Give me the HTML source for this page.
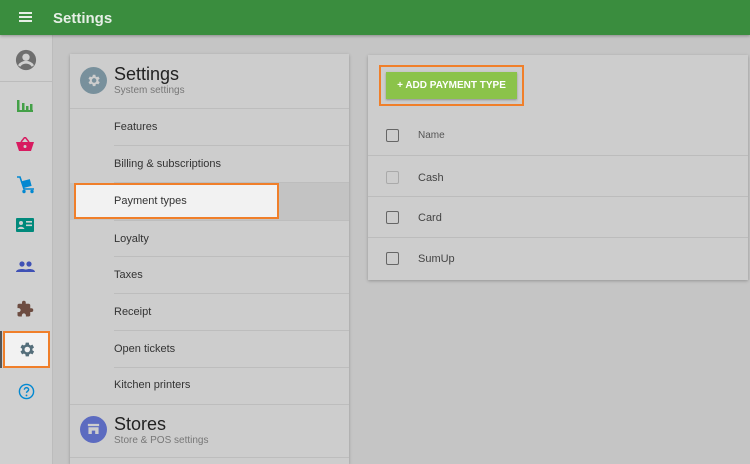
<!DOCTYPE html><html><head><style>
*{margin:0;padding:0;box-sizing:border-box}
html,body{width:750px;height:464px;overflow:hidden}
body{background:#c5c5c5;font-family:"Liberation Sans",sans-serif;position:relative}
.hdr{position:absolute;left:0;top:0;width:750px;height:35px;background:#3a8d3e;color:#e6efe6;box-shadow:0 1px 3px rgba(0,0,0,.3);z-index:2}
.hdr .t{position:absolute;left:53px;top:10px;font-size:15px;font-weight:bold}
.side{position:absolute;left:0;top:35px;width:53px;height:429px;background:#d0d0d0;border-right:1px solid #bcbcbc}
.ic{position:absolute;left:16px}
.card{position:absolute;background:#cdcdcd;box-shadow:0 1px 3px rgba(0,0,0,.25)}
.it{position:absolute;left:44px;width:235px;height:37px;border-bottom:1px solid #bdbdbd;font-size:11px;color:#333;line-height:37px}
.row{position:absolute;left:0;width:380px;height:41px;border-bottom:1px solid #bcbcbc;font-size:11px;color:#444}
.cb{position:absolute;left:18px;width:13px;height:13px;border:1.5px solid #666;border-radius:2px}
.row span{position:absolute;left:50px}
</style></head><body>
<div class="hdr"><svg style="position:absolute;left:19px;top:12px" width="13" height="10"><rect y="0" width="13" height="2" fill="#e6efe6"/><rect y="4" width="13" height="2" fill="#e6efe6"/><rect y="8" width="13" height="2" fill="#e6efe6"/></svg><div class="t">Settings</div></div>
<div class="side">
<div style="position:absolute;left:0;top:46px;width:53px;height:1px;background:#bcbcbc"></div>
<svg class="ic" style="left:15px;top:14px" width="22" height="22" viewBox="0 0 24 24"><circle cx="12" cy="12" r="11" fill="#6e6e6e"/><circle cx="12" cy="9" r="4" fill="#d0d0d0"/><path d="M4.5 18.5c2-3 4.5-4 7.5-4s5.5 1 7.5 4" stroke="#d0d0d0" stroke-width="3" fill="none"/></svg>
<svg class="ic" style="top:62px" width="18" height="16"><rect x="1" y="3" width="2.5" height="12" fill="#43a047"/><rect x="6" y="6" width="2.5" height="9" fill="#43a047"/><rect x="10" y="9" width="2.5" height="6" fill="#43a047"/><rect x="14" y="7" width="2.5" height="8" fill="#43a047"/><rect x="1" y="13" width="16" height="2" fill="#43a047"/></svg>
<svg class="ic" style="top:102px" width="18" height="14"><path d="M5 5L9 0L13 5" stroke="#d81b60" stroke-width="1.5" fill="none"/><path d="M0 5h18l-3 9H3z" fill="#d81b60"/><circle cx="9" cy="9.5" r="1.5" fill="#d0d0d0"/></svg>
<svg class="ic" style="top:141px" width="20" height="18"><path d="M1 1h3l4 12h10" stroke="#0288d1" stroke-width="1.6" fill="none"/><rect x="7" y="4" width="8" height="7" fill="#0288d1" transform="rotate(-15 11 8)"/><circle cx="8" cy="15.5" r="1.7" fill="#0288d1"/><circle cx="16" cy="15.5" r="1.7" fill="#0288d1"/></svg>
<svg class="ic" style="top:183px" width="18" height="14"><rect width="18" height="14" rx="1" fill="#00897b"/><circle cx="5" cy="5" r="2" fill="#d0d0d0"/><path d="M1.5 11c1-3 6-3 7 0z" fill="#d0d0d0"/><rect x="10" y="3" width="6" height="1.6" fill="#d0d0d0"/><rect x="10" y="6.5" width="6" height="1.6" fill="#d0d0d0"/></svg>
<svg class="ic" style="top:226px" width="19" height="11"><circle cx="6" cy="3" r="2.6" fill="#3f51b5"/><circle cx="13" cy="3" r="2.6" fill="#3f51b5"/><path d="M0 11c0-4 12-4 12 0zM8 11c0-4 11-4 11 0z" fill="#3f51b5"/></svg>
<svg class="ic" style="top:265px" width="18" height="18" viewBox="0 0 24 24"><path d="M20.5 11H19V7c0-1.1-.9-2-2-2h-4V3.5a2.5 2.5 0 00-5 0V5H4c-1.1 0-2 .9-2 2v3.8h1.5c1.5 0 2.7 1.2 2.7 2.7S5 16.2 3.5 16.2H2V20c0 1.1.9 2 2 2h3.8v-1.5c0-1.5 1.2-2.7 2.7-2.7s2.7 1.2 2.7 2.7V22H17c1.1 0 2-.9 2-2v-4h1.5a2.5 2.5 0 000-5z" fill="#6d4c41"/></svg>
<div style="position:absolute;left:0;top:296px;width:2px;height:37px;background:#555"></div>
<div style="position:absolute;left:3px;top:296px;width:47px;height:37px;background:#f2f2f2;border:2.5px solid #f07f2a"></div>
<svg class="ic" style="left:17px;top:305px" width="19" height="19" viewBox="0 0 24 24"><path d="M19.4 13a7.5 7.5 0 000-2l2.1-1.6-2-3.5-2.5 1a7 7 0 00-1.7-1L15 3.3h-4l-.4 2.6a7 7 0 00-1.7 1l-2.5-1-2 3.5L6.5 11a7.5 7.5 0 000 2l-2.1 1.6 2 3.5 2.5-1a7 7 0 001.7 1l.4 2.6h4l.4-2.6a7 7 0 001.7-1l2.5 1 2-3.5zM13 15.5a3.5 3.5 0 110-7 3.5 3.5 0 010 7z" fill="#546e7a"/></svg>
<svg class="ic" style="left:18px;top:348px" width="17" height="17" viewBox="0 0 24 24"><circle cx="12" cy="12" r="10" stroke="#0288d1" stroke-width="2" fill="none"/><path d="M9 9.5a3 3 0 116 0c0 2-3 2-3 4.5" stroke="#0288d1" stroke-width="2" fill="none"/><circle cx="12" cy="17.5" r="1.3" fill="#0288d1"/></svg>
</div>
<div class="card" style="left:70px;top:54px;width:279px;height:410px">
<svg style="position:absolute;left:10px;top:13px" width="27" height="27" viewBox="0 0 24 24"><circle cx="12" cy="12" r="12" fill="#78909c"/><g transform="translate(5 5) scale(.58)"><path d="M19.4 13a7.5 7.5 0 000-2l2.1-1.6-2-3.5-2.5 1a7 7 0 00-1.7-1L15 3.3h-4l-.4 2.6a7 7 0 00-1.7 1l-2.5-1-2 3.5L6.5 11a7.5 7.5 0 000 2l-2.1 1.6 2 3.5 2.5-1a7 7 0 001.7 1l.4 2.6h4l.4-2.6a7 7 0 001.7-1l2.5 1 2-3.5zM13 15.5a3.5 3.5 0 110-7 3.5 3.5 0 010 7z" fill="#cdcdcd"/></g></svg>
<div style="position:absolute;left:44px;top:10px;font-size:18px;color:#222">Settings</div>
<div style="position:absolute;left:44px;top:31px;font-size:10px;color:#777">System settings</div>
<div style="position:absolute;left:0;top:54px;width:279px;height:1px;background:#bdbdbd"></div>
<div class="it" style="top:55px">Features</div>
<div class="it" style="top:92px">Billing &amp; subscriptions</div>
<div style="position:absolute;left:0;top:129px;width:279px;height:37px;background:#c3c3c3"></div>
<div style="position:absolute;left:4px;top:129px;width:205px;height:36px;background:#f2f2f2;border:2.5px solid #f07f2a"></div>
<div class="it" style="top:129px;border:none">Payment types</div>
<div class="it" style="top:166px;border-top:1px solid #bdbdbd">Loyalty</div>
<div class="it" style="top:203px">Taxes</div>
<div class="it" style="top:240px">Receipt</div>
<div class="it" style="top:277px">Open tickets</div>
<div class="it" style="top:313px;border:none">Kitchen printers</div>
<div style="position:absolute;left:0;top:350px;width:279px;height:1px;background:#bdbdbd"></div>
<svg style="position:absolute;left:10px;top:362px" width="27" height="27" viewBox="0 0 24 24"><circle cx="12" cy="12" r="12" fill="#5c6bc0"/><rect x="7" y="7" width="10" height="2" fill="#cdcdcd"/><rect x="7.5" y="10" width="9" height="6" fill="#cdcdcd"/><rect x="10.5" y="13" width="3" height="3" fill="#5c6bc0"/></svg>
<div style="position:absolute;left:44px;top:360px;font-size:18px;color:#222">Stores</div>
<div style="position:absolute;left:44px;top:381px;font-size:10px;color:#777">Store &amp; POS settings</div>
<div style="position:absolute;left:0;top:403px;width:279px;height:1px;background:#bdbdbd"></div>
</div>
<div class="card" style="left:368px;top:55px;width:380px;height:225px">
<div style="position:absolute;left:11px;top:10px;width:145px;height:41px;border:2.5px solid #f07f2a"></div>
<div style="position:absolute;left:18px;top:17px;width:131px;height:27px;background:#8bc34a;box-shadow:0 1px 2px rgba(0,0,0,.3);color:#fff;font-size:10px;font-weight:bold;line-height:27px;text-align:center">+ ADD PAYMENT TYPE</div>
<div class="row" style="top:60px"><div class="cb" style="top:14px"></div><span style="top:15px;font-size:10px;color:#555">Name</span></div>
<div class="row" style="top:101px;height:41px"><div class="cb" style="top:15px;border-color:#aaa"></div><span style="top:16px">Cash</span></div>
<div class="row" style="top:142px"><div class="cb" style="top:14px"></div><span style="top:15px">Card</span></div>
<div class="row" style="top:183px;border:none"><div class="cb" style="top:14px"></div><span style="top:15px">SumUp</span></div>
</div>
</body></html>
